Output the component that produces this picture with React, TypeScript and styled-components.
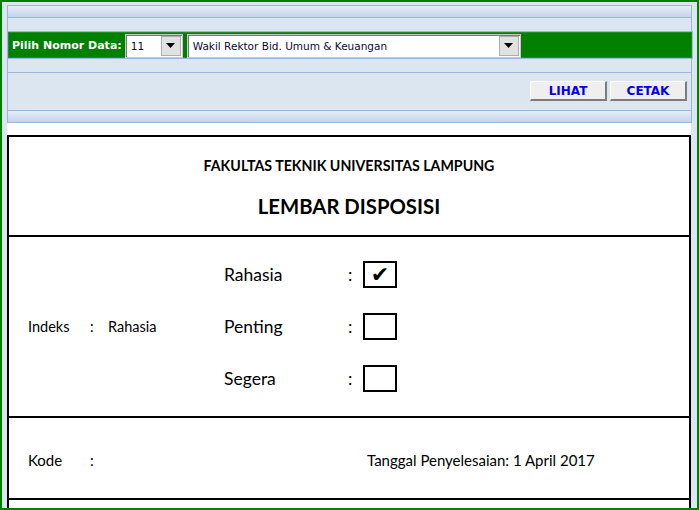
import styled, { createGlobalStyle } from "styled-components";

const GlobalStyle = createGlobalStyle`
  body {
    margin: 0;
    font-family: Lato, "Open Sans", sans-serif;
  }
`;

const Window = styled.div`
  width: 699px;
  height: 510px;
  box-sizing: border-box;
  border: 2px solid #008000;
  background: #dce6f1;
  padding: 3px 5px 0;
  display: flex;
  flex-direction: column;
  overflow: hidden;
`;

const Panel = styled.div`
  border-left: 1px solid #9bb7dc;
  border-right: 1px solid #9bb7dc;
  display: flex;
  flex-direction: column;
`;

const Strip = styled.div`
  height: 13px;
  box-sizing: border-box;
  border-top: 1px solid #9bb7dc;
  border-bottom: 1px solid #9bb7dc;
  background: linear-gradient(#e6edf7, #c4d4ea);
`;

const Spacer = styled.div<{ $h: number; $line?: boolean }>`
  height: ${(p) => p.$h}px;
  box-sizing: border-box;
  border-bottom: ${(p) => (p.$line ? "1px solid #9bb7dc" : "none")};
`;

const GreenBar = styled.div`
  height: 28px;
  box-sizing: border-box;
  margin: 0 -2px 0 -1px;
  border: 1px solid #9bb7dc;
  background: #008000;
  box-shadow: inset 0 0 0 1px #1f8f1f;
  display: flex;
  align-items: center;
  padding: 1px 4px 0;
`;

const BarLabel = styled.span`
  font-family: "DejaVu Sans", sans-serif;
  font-weight: bold;
  font-size: 11px;
  color: #ffffff;
  margin-right: 3px;
`;

const SelectBox = styled.div<{ $w: number }>`
  width: ${(p) => p.$w}px;
  height: 24px;
  box-sizing: border-box;
  margin-right: 4px;
  background: #ffffff;
  border: 1px solid #c8c8c8;
  box-shadow: inset 1px 1px 0 #7a7a7a;
  display: flex;
  align-items: center;
  justify-content: space-between;
  padding: 0 1px 0 5px;
`;

const SelectText = styled.span`
  font-family: "DejaVu Sans", sans-serif;
  font-size: 10.5px;
  color: #0a0a3c;
  white-space: nowrap;
`;

const ArrowButton = styled.div`
  width: 20px;
  height: 20px;
  box-sizing: border-box;
  background: #e1e1e1;
  border: 1px solid #adadad;
  display: flex;
  align-items: center;
  justify-content: center;
`;

const ButtonRow = styled.div`
  height: 37px;
  box-sizing: border-box;
  display: flex;
  justify-content: flex-end;
  gap: 3px;
  padding: 8px 4px 0 0;
`;

const ActionButton = styled.button`
  width: 77px;
  height: 20px;
  box-sizing: border-box;
  padding: 0;
  background: #efefef;
  border-style: solid;
  border-width: 1px 2px 2px 1px;
  border-color: #ffffff #7c7c7c #7c7c7c #ffffff;
  font-family: "DejaVu Sans", sans-serif;
  font-weight: bold;
  font-size: 12px;
  color: #0000ee;
`;

const Content = styled.div`
  flex: 1;
  background: #ffffff;
  padding-top: 12px;
  margin-right: 1px;
`;

const FormBox = styled.div`
  border: 2px solid #000000;
`;

const Section = styled.div<{ $h: number }>`
  height: ${(p) => p.$h}px;
  border-bottom: 2px solid #000000;
`;

const Header = styled(Section)`
  display: flex;
  flex-direction: column;
  align-items: center;
`;

const Faculty = styled.div`
  margin-top: 19px;
  line-height: 20px;
  font-weight: bold;
  font-size: 14.2px;
  color: #000000;
`;

const Title = styled.div`
  margin-top: 15px;
  line-height: 30px;
  font-weight: bold;
  font-size: 20.3px;
  color: #000000;
`;

const IndexSection = styled(Section)`
  display: flex;
  align-items: center;
`;

const IndexInfo = styled.div`
  width: 215px;
  display: flex;
  padding-left: 19px;
  box-sizing: border-box;
  font-size: 14.5px;
  color: #000000;
`;

const Cell = styled.span<{ $w?: number }>`
  display: inline-block;
  width: ${(p) => (p.$w ? `${p.$w}px` : "auto")};
  white-space: nowrap;
`;

const Priorities = styled.div`
  display: flex;
  flex-direction: column;
`;

const PriorityRow = styled.div`
  height: 52px;
  display: flex;
  align-items: center;
  font-size: 17.5px;
  color: #000000;
`;

const PriorityLabel = styled.span`
  width: 124px;
`;

const Colon = styled.span`
  width: 15px;
`;

const CheckBox = styled.div`
  width: 34px;
  height: 27px;
  box-sizing: border-box;
  border: 2px solid #000000;
  display: flex;
  align-items: center;
  justify-content: center;
  font-family: "DejaVu Sans", sans-serif;
  font-size: 22px;
  line-height: 1;
`;

const FooterSection = styled(Section)`
  display: flex;
  align-items: center;
  padding: 3px 0 0 19px;
  box-sizing: border-box;
  font-size: 15px;
  color: #000000;
`;

function DownArrow() {
  return (
    <svg width="9" height="5" viewBox="0 0 9 5">
      <path d="M0 0h9L4.5 5z" fill="#000" />
    </svg>
  );
}

const priorities = [
  { label: "Rahasia", checked: true },
  { label: "Penting", checked: false },
  { label: "Segera", checked: false },
];

export default function App() {
  return (
    <>
      <GlobalStyle />
      <Window>
        <Panel>
          <Strip />
          <Spacer $h={13} />
          <GreenBar>
            <BarLabel>Pilih Nomor Data:</BarLabel>
            <SelectBox $w={58}>
              <SelectText>11</SelectText>
              <ArrowButton>
                <DownArrow />
              </ArrowButton>
            </SelectBox>
            <SelectBox $w={334}>
              <SelectText>Wakil Rektor Bid. Umum &amp; Keuangan</SelectText>
              <ArrowButton>
                <DownArrow />
              </ArrowButton>
            </SelectBox>
          </GreenBar>
          <Spacer $h={14} $line />
          <ButtonRow>
            <ActionButton>LIHAT</ActionButton>
            <ActionButton>CETAK</ActionButton>
          </ButtonRow>
          <Strip />
        </Panel>
        <Content>
          <FormBox>
            <Header $h={98}>
              <Faculty>FAKULTAS TEKNIK UNIVERSITAS LAMPUNG</Faculty>
              <Title>LEMBAR DISPOSISI</Title>
            </Header>
            <IndexSection $h={179}>
              <IndexInfo>
                <Cell $w={62}>Indeks</Cell>
                <Cell $w={18}>:</Cell>
                <Cell>Rahasia</Cell>
              </IndexInfo>
              <Priorities>
                {priorities.map((p) => (
                  <PriorityRow key={p.label}>
                    <PriorityLabel>{p.label}</PriorityLabel>
                    <Colon>:</Colon>
                    <CheckBox>{p.checked ? "✔" : ""}</CheckBox>
                  </PriorityRow>
                ))}
              </Priorities>
            </IndexSection>
            <FooterSection $h={82}>
              <Cell $w={339}>
                <Cell $w={62}>Kode</Cell>
                <Cell>:</Cell>
              </Cell>
              <Cell>Tanggal Penyelesaian: 1 April 2017</Cell>
            </FooterSection>
            <Section $h={60} />
          </FormBox>
        </Content>
      </Window>
    </>
  );
}
